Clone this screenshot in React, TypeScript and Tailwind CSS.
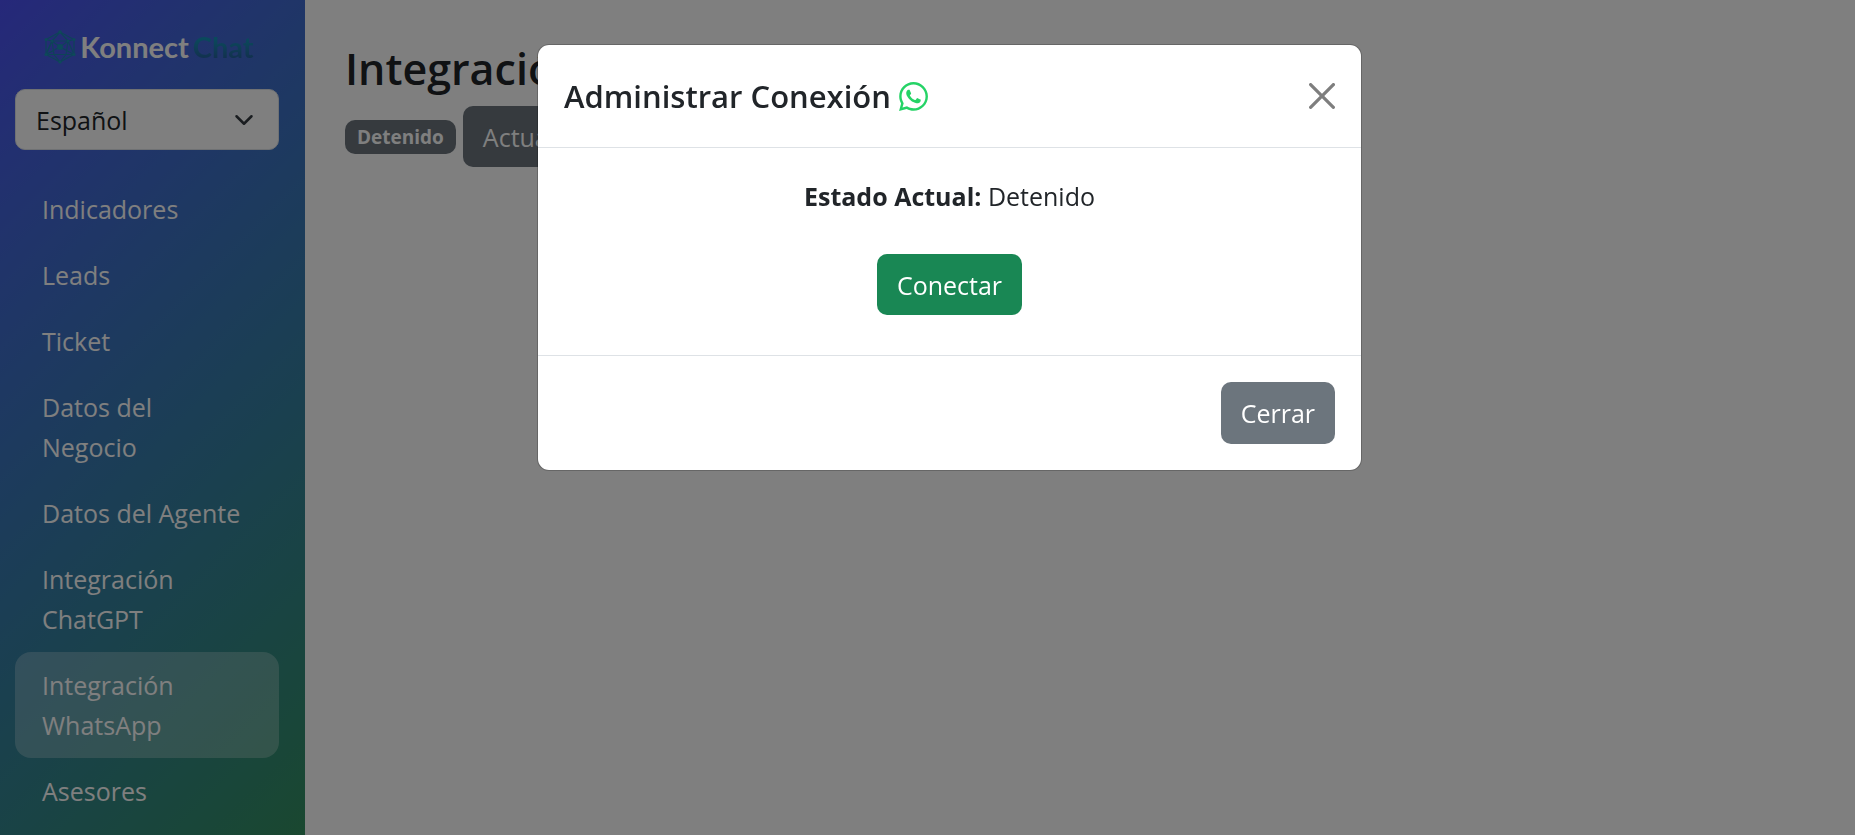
import React from 'react';
import { FaWhatsapp } from 'react-icons/fa';

const NAV_ITEMS = [
    'Indicadores',
    'Leads',
    'Ticket',
    'Datos del Negocio',
    'Datos del Agente',
    'Integración ChatGPT',
    'Integración WhatsApp',
    'Asesores',
];

const ACTIVE_ITEM = 'Integración WhatsApp';

const LogoMark: React.FC = () => (
    <svg width="32" height="34" viewBox="0 0 32 34" fill="none" stroke="#1c86b0" strokeWidth="1.200" aria-hidden="true">
        <path d="M16 2 30 9.500V24.500L16 32 2 24.500V9.500Z" />
        <path d="M8 11H24L30 24.500H2Z" />
        <path d="M16 2 8 11 2 9.500M16 2 24 11 30 9.500M8 11 2 24.500M8 11 16 17 24 11M2 24.500 16 17 30 24.500M8 11 10 24.500 16 32 22 24.500 24 11" />
        <g fill="#1c92b4" stroke="none">
            <circle cx="16" cy="2" r="1.800" />
            <circle cx="30" cy="9.500" r="1.600" />
            <circle cx="30" cy="24.500" r="1.600" />
            <circle cx="16" cy="32" r="1.600" />
            <circle cx="2" cy="24.500" r="1.600" />
            <circle cx="2" cy="9.500" r="1.600" />
            <circle cx="8" cy="11" r="1.300" />
            <circle cx="24" cy="11" r="1.300" />
            <circle cx="16" cy="17" r="3" />
        </g>
    </svg>
);

const Sidebar: React.FC = () => (
    <aside className="w-[305px] shrink-0 h-screen overflow-hidden pl-[15px] pr-[26px] bg-linear-135 from-[#4c50f4] to-[#349060]">
        <div className="flex items-center justify-center h-[89px] gap-1 pt-1 pl-1">
            <LogoMark />
            <div className="flex items-center gap-1 font-['Lato',sans-serif] font-bold text-[29px] leading-10">
                <span className="text-white">Konnect</span>
                <span className="text-transparent bg-clip-text bg-linear-to-b from-[#1493b8] from-30% to-[#24609c] to-80%">Chat</span>
            </div>
        </div>

        <div className="relative">
            <select
                aria-label="Idioma"
                defaultValue="es"
                className="appearance-none block w-full h-[61px] pl-5 pr-14 rounded-[10px] border border-[#dee2e6] bg-white text-[#212529]"
            >
                <option value="es">Español</option>
                <option value="en">English</option>
            </select>
            <svg className="absolute right-[25px] top-[21px] w-5 h-5 pointer-events-none" viewBox="0 0 16 16" fill="none" stroke="#343a40" strokeWidth="2" strokeLinecap="round" strokeLinejoin="round">
                <path d="m2 5 6 6 6-6" />
            </svg>
        </div>

        <nav className="mt-[26px] flex flex-col">
            {NAV_ITEMS.map((item) => (
                <a
                    key={item}
                    href="#"
                    className={`block px-[27px] py-[13px] text-white ${item === ACTIVE_ITEM ? 'rounded-2xl bg-white/25' : ''}`}
                >
                    {item}
                </a>
            ))}
        </nav>
    </aside>
);

const ConnectionModal: React.FC = () => (
    <div className="fixed inset-0 flex items-start justify-center pt-11 pl-11 bg-black/50">
        <div role="dialog" aria-labelledby="modal-title" className="w-full max-w-[825px] rounded-xl border border-black/20 bg-white bg-clip-padding">
            <div className="flex items-center justify-between p-[26px] border-b border-[#dee2e6]">
                <h5 id="modal-title" className="flex items-center gap-2 text-[31px] leading-[50px] font-semibold">
                    Administrar Conexión
                    <FaWhatsapp className="w-[29px] h-[33px] text-[#25d366]" />
                </h5>
                <button type="button" aria-label="Close" className="opacity-50">
                    <svg className="w-[26px] h-[26px]" viewBox="0 0 16 16" fill="#000">
                        <path d="M.293.293a1 1 0 0 1 1.414 0L8 6.586 14.293.293a1 1 0 1 1 1.414 1.414L9.414 8l6.293 6.293a1 1 0 0 1-1.414 1.414L8 9.414l-6.293 6.293a1 1 0 0 1-1.414-1.414L6.586 8 .293 1.707a1 1 0 0 1 0-1.414" />
                    </svg>
                </button>
            </div>
            <div className="flex flex-col items-center px-[26px] pt-7 pb-10">
                <p className="mb-[38px]">
                    <strong className="font-bold">Estado Actual:</strong> Detenido
                </p>
                <button type="button" className="h-[61px] px-5 rounded-[10px] bg-[#198754] text-white">
                    Conectar
                </button>
            </div>
            <div className="flex justify-end p-[26px] border-t border-[#dee2e6]">
                <button type="button" className="h-[62px] px-5 rounded-[10px] bg-[#6c757d] text-white">
                    Cerrar
                </button>
            </div>
        </div>
    </div>
);

const App: React.FC = () => (
    <div className="flex h-screen overflow-hidden bg-white font-['Open_Sans',sans-serif] text-[25px] leading-10 text-[#212529]">
        <Sidebar />
        <main className="flex-1 p-10">
            <h1 className="mb-2 text-[43px] leading-[58px] font-semibold">Integración WhatsApp</h1>
            <div className="flex items-center gap-[7px]">
                <span className="px-3 rounded-[10px] bg-[#6c757d] text-white text-[19px] leading-[34px] font-bold">Detenido</span>
                <button type="button" className="h-[61px] px-5 rounded-[10px] bg-[#6c757d] text-white">
                    Actualizar
                </button>
            </div>
        </main>
        <ConnectionModal />
    </div>
);

export default App;
